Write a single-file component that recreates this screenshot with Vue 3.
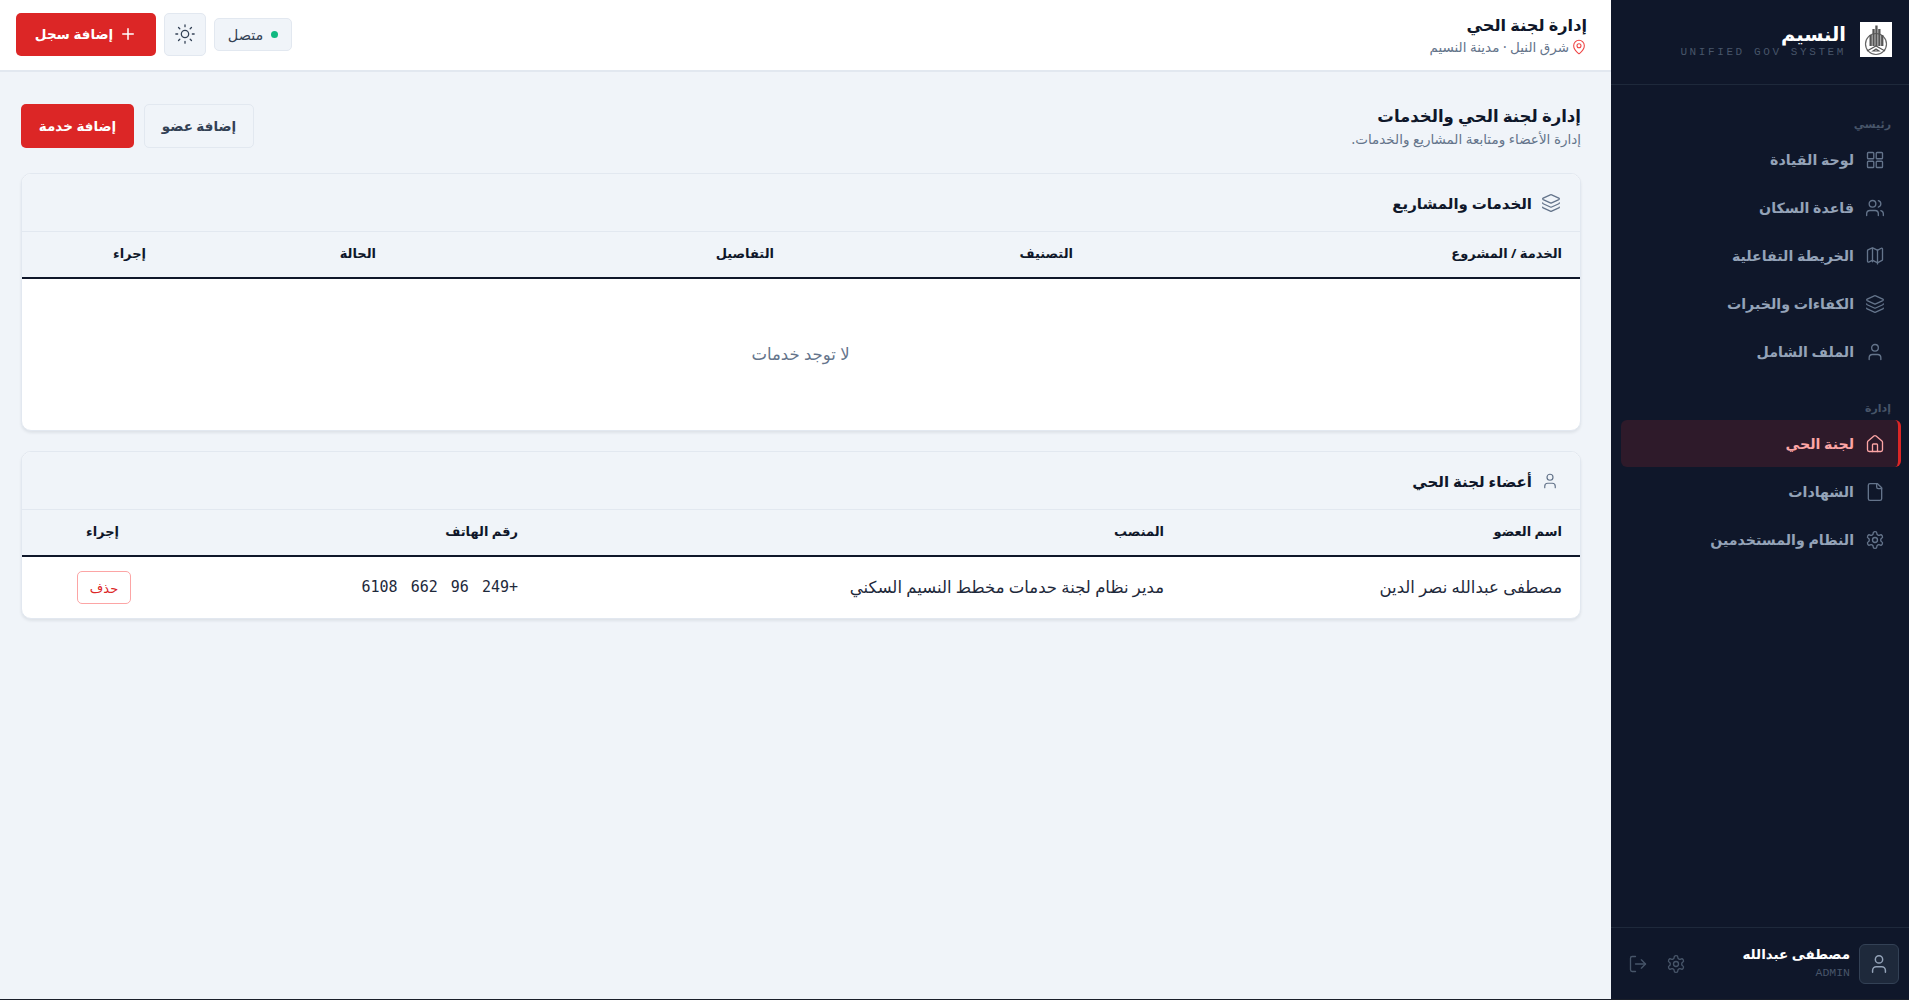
<template>
  <div class="shell" dir="rtl">
    <aside class="sidebar">
      <div class="brand">
        <div class="logo">
          <svg viewBox="0 0 32 35" width="32" height="35">
            <circle cx="16" cy="22" r="10.5" fill="none" stroke="#666" stroke-width="1.2" />
            <path d="M9.5 13h2.3v11H9.500zM12.400 7h2.300v17h-2.300zM15.300 3.500h2.300V24h-2.300zM18.200 7h2.300v17h-2.300zM21.100 13h2.300v11h-2.300z" fill="#555" />
            <path d="M7 29l9-5 9 5M16 27l-3 2h6z" fill="none" stroke="#555" stroke-width="1.1" />
          </svg>
        </div>
        <div class="brand-text">
          <div class="brand-name">النسيم</div>
          <div class="brand-sub" dir="ltr">UNIFIED GOV SYSTEM</div>
        </div>
      </div>

      <nav class="nav">
        <template v-for="group in navGroups" :key="group.label">
          <div class="nav-label">{{ group.label }}</div>
          <a
            v-for="item in group.items"
            :key="item.text"
            class="nav-item"
            :class="{ active: item.active }"
          >
            <svg class="ico nav-ico" viewBox="0 0 24 24" v-html="icons[item.icon]"></svg>
            <span>{{ item.text }}</span>
          </a>
        </template>
      </nav>

      <div class="user">
        <div class="avatar">
          <svg class="ico avatar-ico" viewBox="0 0 24 24" v-html="icons.user"></svg>
        </div>
        <div class="user-text">
          <div class="user-name">مصطفى عبدالله</div>
          <div class="user-role">ADMIN</div>
        </div>
        <div class="user-actions">
          <svg class="ico" viewBox="0 0 24 24" v-html="icons.settings"></svg>
          <svg class="ico" viewBox="0 0 24 24" v-html="icons.logout"></svg>
        </div>
      </div>
    </aside>

    <div class="main">
      <header class="topbar">
        <div class="top-title">
          <h1>إدارة لجنة الحي</h1>
          <div class="location">
            <svg class="ico pin" viewBox="0 0 24 24" v-html="icons.pin"></svg>
            <span>شرق النيل · مدينة النسيم</span>
          </div>
        </div>
        <div class="top-actions">
          <div class="status"><i class="dot"></i>متصل</div>
          <button class="icon-btn">
            <svg class="ico sun" viewBox="0 0 24 24" v-html="icons.sun"></svg>
          </button>
          <button class="btn primary big">
            <svg class="ico plus" viewBox="0 0 24 24"><path d="M12 5v14M5 12h14" /></svg>
            إضافة سجل
          </button>
        </div>
      </header>

      <main class="content">
        <div class="page-head">
          <div>
            <h2>إدارة لجنة الحي والخدمات</h2>
            <p>إدارة الأعضاء ومتابعة المشاريع والخدمات.</p>
          </div>
          <div class="page-actions">
            <button class="btn ghost">إضافة عضو</button>
            <button class="btn primary">إضافة خدمة</button>
          </div>
        </div>

        <section class="card">
          <div class="card-head">
            <svg class="ico card-ico" viewBox="0 0 24 24" v-html="icons.layers"></svg>
            <h3>الخدمات والمشاريع</h3>
          </div>
          <table>
            <colgroup>
              <col v-for="w in serviceCols" :key="w" :style="{ width: w + 'px' }" />
            </colgroup>
            <thead>
              <tr>
                <th>الخدمة / المشروع</th>
                <th>التصنيف</th>
                <th>التفاصيل</th>
                <th>الحالة</th>
                <th>إجراء</th>
              </tr>
            </thead>
            <tbody>
              <tr>
                <td colspan="5" class="empty">لا توجد خدمات</td>
              </tr>
            </tbody>
          </table>
        </section>

        <section class="card">
          <div class="card-head">
            <svg class="ico card-ico small" viewBox="0 0 24 24" v-html="icons.user"></svg>
            <h3>أعضاء لجنة الحي</h3>
          </div>
          <table>
            <colgroup>
              <col v-for="w in memberCols" :key="w" :style="{ width: w + 'px' }" />
            </colgroup>
            <thead>
              <tr>
                <th>اسم العضو</th>
                <th>المنصب</th>
                <th>رقم الهاتف</th>
                <th>إجراء</th>
              </tr>
            </thead>
            <tbody>
              <tr v-for="m in members" :key="m.phone">
                <td>{{ m.name }}</td>
                <td>{{ m.role }}</td>
                <td class="phone">{{ m.phone }}</td>
                <td class="action"><button class="del">حذف</button></td>
              </tr>
            </tbody>
          </table>
        </section>
      </main>
    </div>
  </div>
</template>

<script setup>
const icons = {
  grid: '<rect x="3" y="3" width="7.5" height="7.5" rx="1"/><rect x="13.5" y="3" width="7.5" height="7.5" rx="1"/><rect x="3" y="13.5" width="7.5" height="7.5" rx="1"/><rect x="13.5" y="13.5" width="7.5" height="7.5" rx="1"/>',
  users: '<path d="M16 21v-2a4 4 0 0 0-4-4H6a4 4 0 0 0-4 4v2"/><circle cx="9" cy="7" r="4"/><path d="M22 21v-2a4 4 0 0 0-3-3.87"/><path d="M16 3.13a4 4 0 0 1 0 7.75"/>',
  map: '<path d="M14.1 4.55a2 2 0 0 0 1.8 0l3.65-1.83A1 1 0 0 1 21 3.62v12.76a1 1 0 0 1-.55.9l-4.55 2.27a2 2 0 0 1-1.8 0l-4.2-2.1a2 2 0 0 0-1.8 0l-3.65 1.83A1 1 0 0 1 3 18.38V5.62a1 1 0 0 1 .55-.9L8.1 2.45a2 2 0 0 1 1.8 0z"/><path d="M15 5v16.5M9 2.5V19"/>',
  layers: '<path d="M12.8 2.2a2 2 0 0 0-1.6 0L2.6 6.1a1 1 0 0 0 0 1.8l8.6 3.9a2 2 0 0 0 1.6 0l8.6-3.9a1 1 0 0 0 0-1.8z"/><path d="M2 12a1 1 0 0 0 .6.9l8.6 3.9a2 2 0 0 0 1.6 0l8.6-3.9A1 1 0 0 0 22 12"/><path d="M2 17a1 1 0 0 0 .6.9l8.6 3.9a2 2 0 0 0 1.6 0l8.6-3.9A1 1 0 0 0 22 17"/>',
  user: '<path d="M19 21v-2a4 4 0 0 0-4-4H9a4 4 0 0 0-4 4v2"/><circle cx="12" cy="7" r="4"/>',
  home: '<path d="M15 21v-8a1 1 0 0 0-1-1h-4a1 1 0 0 0-1 1v8"/><path d="M3 10a2 2 0 0 1 .7-1.5l7-6a2 2 0 0 1 2.6 0l7 6A2 2 0 0 1 21 10v9a2 2 0 0 1-2 2H5a2 2 0 0 1-2-2z"/>',
  file: '<path d="M15 2H6a2 2 0 0 0-2 2v16a2 2 0 0 0 2 2h12a2 2 0 0 0 2-2V7z"/><path d="M14 2v4a2 2 0 0 0 2 2h4"/>',
  settings: '<path d="M12.22 2h-.44a2 2 0 0 0-2 2v.18a2 2 0 0 1-1 1.73l-.43.25a2 2 0 0 1-2 0l-.15-.08a2 2 0 0 0-2.73.73l-.22.38a2 2 0 0 0 .73 2.73l.15.1a2 2 0 0 1 1 1.72v.51a2 2 0 0 1-1 1.74l-.15.09a2 2 0 0 0-.73 2.73l.22.38a2 2 0 0 0 2.73.73l.15-.08a2 2 0 0 1 2 0l.43.25a2 2 0 0 1 1 1.73V20a2 2 0 0 0 2 2h.44a2 2 0 0 0 2-2v-.18a2 2 0 0 1 1-1.73l.43-.25a2 2 0 0 1 2 0l.15.08a2 2 0 0 0 2.73-.73l.22-.39a2 2 0 0 0-.73-2.73l-.15-.08a2 2 0 0 1-1-1.74v-.5a2 2 0 0 1 1-1.74l.15-.09a2 2 0 0 0 .73-2.73l-.22-.38a2 2 0 0 0-2.73-.73l-.15.08a2 2 0 0 1-2 0l-.43-.25a2 2 0 0 1-1-1.73V4a2 2 0 0 0-2-2z"/><circle cx="12" cy="12" r="3"/>',
  logout: '<path d="M9 21H5a2 2 0 0 1-2-2V5a2 2 0 0 1 2-2h4"/><path d="M16 17l5-5-5-5"/><path d="M21 12H9"/>',
  pin: '<path d="M20 10c0 5-5.5 10.2-7.4 11.8a1 1 0 0 1-1.2 0C9.5 20.2 4 15 4 10a8 8 0 0 1 16 0"/><circle cx="12" cy="10" r="3"/>',
  sun: '<circle cx="12" cy="12" r="4"/><path d="M12 2v2M12 20v2M4.93 4.93l1.41 1.41M17.66 17.66l1.41 1.41M2 12h2M20 12h2M6.34 17.66l-1.41 1.41M19.07 4.93l-1.41 1.41"/>',
};

const navGroups = [
  {
    label: 'رئيسي',
    items: [
      { text: 'لوحة القيادة', icon: 'grid' },
      { text: 'قاعدة السكان', icon: 'users' },
      { text: 'الخريطة التفاعلية', icon: 'map' },
      { text: 'الكفاءات والخبرات', icon: 'layers' },
      { text: 'الملف الشامل', icon: 'user' },
    ],
  },
  {
    label: 'إدارة',
    items: [
      { text: 'لجنة الحي', icon: 'home', active: true },
      { text: 'الشهادات', icon: 'file' },
      { text: 'النظام والمستخدمين', icon: 'settings' },
    ],
  },
];

const serviceCols = [489, 299, 398, 230, 143];
const memberCols = [398, 646, 399, 116];

const members = [
  {
    name: 'مصطفى عبدالله نصر الدين',
    role: 'مدير نظام لجنة حدمات مخطط النسيم السكني',
    phone: '+249 96 662 6108',
  },
];
</script>

<style scoped>
.shell {
  display: flex;
  height: 999px;
  font-family: "Noto Sans", "DejaVu Sans", sans-serif;
  color: #0f172a;
  background: #f0f4f9;
}

.ico {
  width: 20px;
  height: 20px;
  fill: none;
  stroke: currentColor;
  stroke-width: 1.6;
  stroke-linecap: round;
  stroke-linejoin: round;
  flex: none;
}

/* sidebar */
.sidebar {
  width: 298px;
  flex: none;
  display: flex;
  flex-direction: column;
  background: #0f172a;
  color: #94a3b8;
}

.brand {
  height: 85px;
  box-sizing: border-box;
  display: flex;
  align-items: flex-start;
  gap: 14px;
  padding: 22px 17px 0 0;
  border-bottom: 1px solid #1e293b;
}

.logo {
  width: 32px;
  height: 35px;
  background: #fff;
}

.brand-name {
  font-size: 19.5px;
  font-weight: 700;
  line-height: 24px;
  color: #fff;
}

.brand-sub {
  font-family: "Liberation Mono", monospace;
  font-size: 11px;
  letter-spacing: 2.6px;
  line-height: 12px;
  color: #475569;
}

.nav {
  flex: 1;
  padding: 31px 8px 0 10px;
}

.nav-label {
  font-size: 11px;
  font-weight: 600;
  line-height: 16px;
  padding-right: 10px;
  color: #475569;
  margin-bottom: 4px;
}

.nav-item {
  height: 47px;
  margin-bottom: 1px;
  display: flex;
  align-items: center;
  gap: 11px;
  padding-right: 16px;
  box-sizing: border-box;
  font-size: 14.2px;
  font-weight: 600;
  border-radius: 6px;
}

.nav-item + .nav-label {
  margin-top: 25px;
}

.nav-ico {
  color: #64748b;
}

.nav-item.active {
  background: #2e1a2a;
  color: #fca5a5;
  border-right: 3px solid #dc2626;
  padding-right: 13px;
}

.nav-item.active .nav-ico {
  color: #fca5a5;
}

.user {
  height: 72px;
  box-sizing: border-box;
  border-top: 1px solid #1e293b;
  display: flex;
  align-items: center;
  gap: 9px;
  padding: 0 10px 0 17px;
}

.avatar {
  width: 40px;
  height: 40px;
  box-sizing: border-box;
  display: flex;
  align-items: center;
  justify-content: center;
  background: #1e293b;
  border: 1px solid #334155;
  border-radius: 6px;
  color: #94a3b8;
}

.avatar-ico {
  width: 22px;
  height: 22px;
}

.user-text {
  flex: 1;
}

.user-name {
  font-size: 13.5px;
  font-weight: 600;
  line-height: 20px;
  margin-top: -4px;
  margin-bottom: 2px;
  color: #fff;
}

.user-role {
  font-family: "Liberation Mono", monospace;
  font-size: 11.5px;
  line-height: 14px;
  color: #475569;
}

.user-actions {
  display: flex;
  gap: 18px;
  color: #475569;
}

/* main */
.main {
  flex: 1;
  min-width: 0;
}

.topbar {
  height: 72px;
  box-sizing: border-box;
  background: #fff;
  border-bottom: 2px solid #e2e8f0;
  display: flex;
  justify-content: space-between;
  align-items: center;
  padding: 0 24px 2px 16px;
}

h1 {
  margin: 0;
  font-size: 16.2px;
  font-weight: 700;
  line-height: 26px;
}

.location {
  display: flex;
  align-items: center;
  gap: 2px;
  font-size: 13.5px;
  line-height: 18px;
  color: #64748b;
}

.pin {
  width: 16px;
  height: 16px;
  color: #ef4444;
}

.top-actions {
  display: flex;
  align-items: center;
  gap: 8px;
}

.status {
  height: 33px;
  width: 78px;
  box-sizing: border-box;
  display: flex;
  align-items: center;
  justify-content: center;
  gap: 8px;
  font-size: 14.5px;
  background: #f0f4f9;
  border: 1px solid #e2e8f0;
  border-radius: 5px;
  color: #334155;
}

.dot {
  width: 7px;
  height: 7px;
  border-radius: 50%;
  background: #10b981;
}

.icon-btn {
  width: 42px;
  height: 43px;
  display: flex;
  align-items: center;
  justify-content: center;
  padding: 0;
  background: #f0f4f9;
  border: 1px solid #e2e8f0;
  border-radius: 5px;
  color: #334155;
}

.sun {
  width: 22px;
  height: 22px;
  stroke-width: 1.4;
}

.btn {
  height: 44px;
  box-sizing: border-box;
  display: flex;
  align-items: center;
  justify-content: center;
  gap: 6px;
  font-family: inherit;
  font-size: 13.5px;
  font-weight: 700;
  border-radius: 5px;
}

.btn.primary {
  width: 113px;
  background: #dc2626;
  border: none;
  color: #fff;
}

.btn.primary.big {
  width: 140px;
  height: 43px;
}

.plus {
  width: 18px;
  height: 18px;
  stroke-width: 2;
}

.btn.ghost {
  width: 110px;
  background: #f0f4f9;
  border: 1px solid #e2e8f0;
  color: #334155;
  font-weight: 600;
}

.content {
  padding: 32px 30px 0 21px;
  display: flex;
  flex-direction: column;
  gap: 20px;
}

.page-head {
  display: flex;
  justify-content: space-between;
  align-items: center;
  margin-bottom: 5px;
}

.page-actions {
  display: flex;
  gap: 10px;
}

h2 {
  margin: 0;
  font-size: 16.5px;
  font-weight: 700;
  line-height: 24px;
}

.page-head p {
  margin: 2px 0 0;
  font-size: 13.5px;
  line-height: 18px;
  color: #64748b;
}

.card {
  background: #fff;
  border: 1px solid #e2e8f0;
  border-radius: 10px;
  box-shadow: 0 2px 3px rgba(15, 23, 42, 0.08);
  overflow: hidden;
}

.card-head {
  height: 58px;
  box-sizing: border-box;
  display: flex;
  align-items: center;
  gap: 9px;
  padding-right: 19px;
  background: #f0f4f9;
  border-bottom: 1px solid #e2e8f0;
}

.card-ico {
  color: #64748b;
}

.card-ico.small {
  width: 18px;
  height: 18px;
  margin-right: 2px;
}

h3 {
  margin: 0;
  font-size: 15px;
  font-weight: 700;
}

table {
  width: 100%;
  table-layout: fixed;
  border-collapse: collapse;
}

th {
  height: 46px;
  padding: 0 18px 3px;
  box-sizing: border-box;
  text-align: right;
  font-size: 13px;
  font-weight: 700;
  background: #f0f4f9;
  border-bottom: 2px solid #0f172a;
}

td {
  height: 62px;
  padding: 0 18px 2px;
  box-sizing: border-box;
  font-size: 16.5px;
  color: #1e293b;
}

td.empty {
  height: 152px;
  text-align: center;
  color: #64748b;
}

td.action {
  padding: 0 6px 0 18px;
}

.phone {
  font-family: "DejaVu Sans Mono", monospace;
  font-size: 15px;
  word-spacing: 4px;
}

.del {
  width: 54px;
  height: 33px;
  font-family: inherit;
  font-size: 13px;
  color: #dc2626;
  background: #fff;
  border: 1px solid #fca5a5;
  border-radius: 5px;
  padding: 0;
}
</style>

<style>
html,
body {
  background: #1a1f2a;
}
</style>
